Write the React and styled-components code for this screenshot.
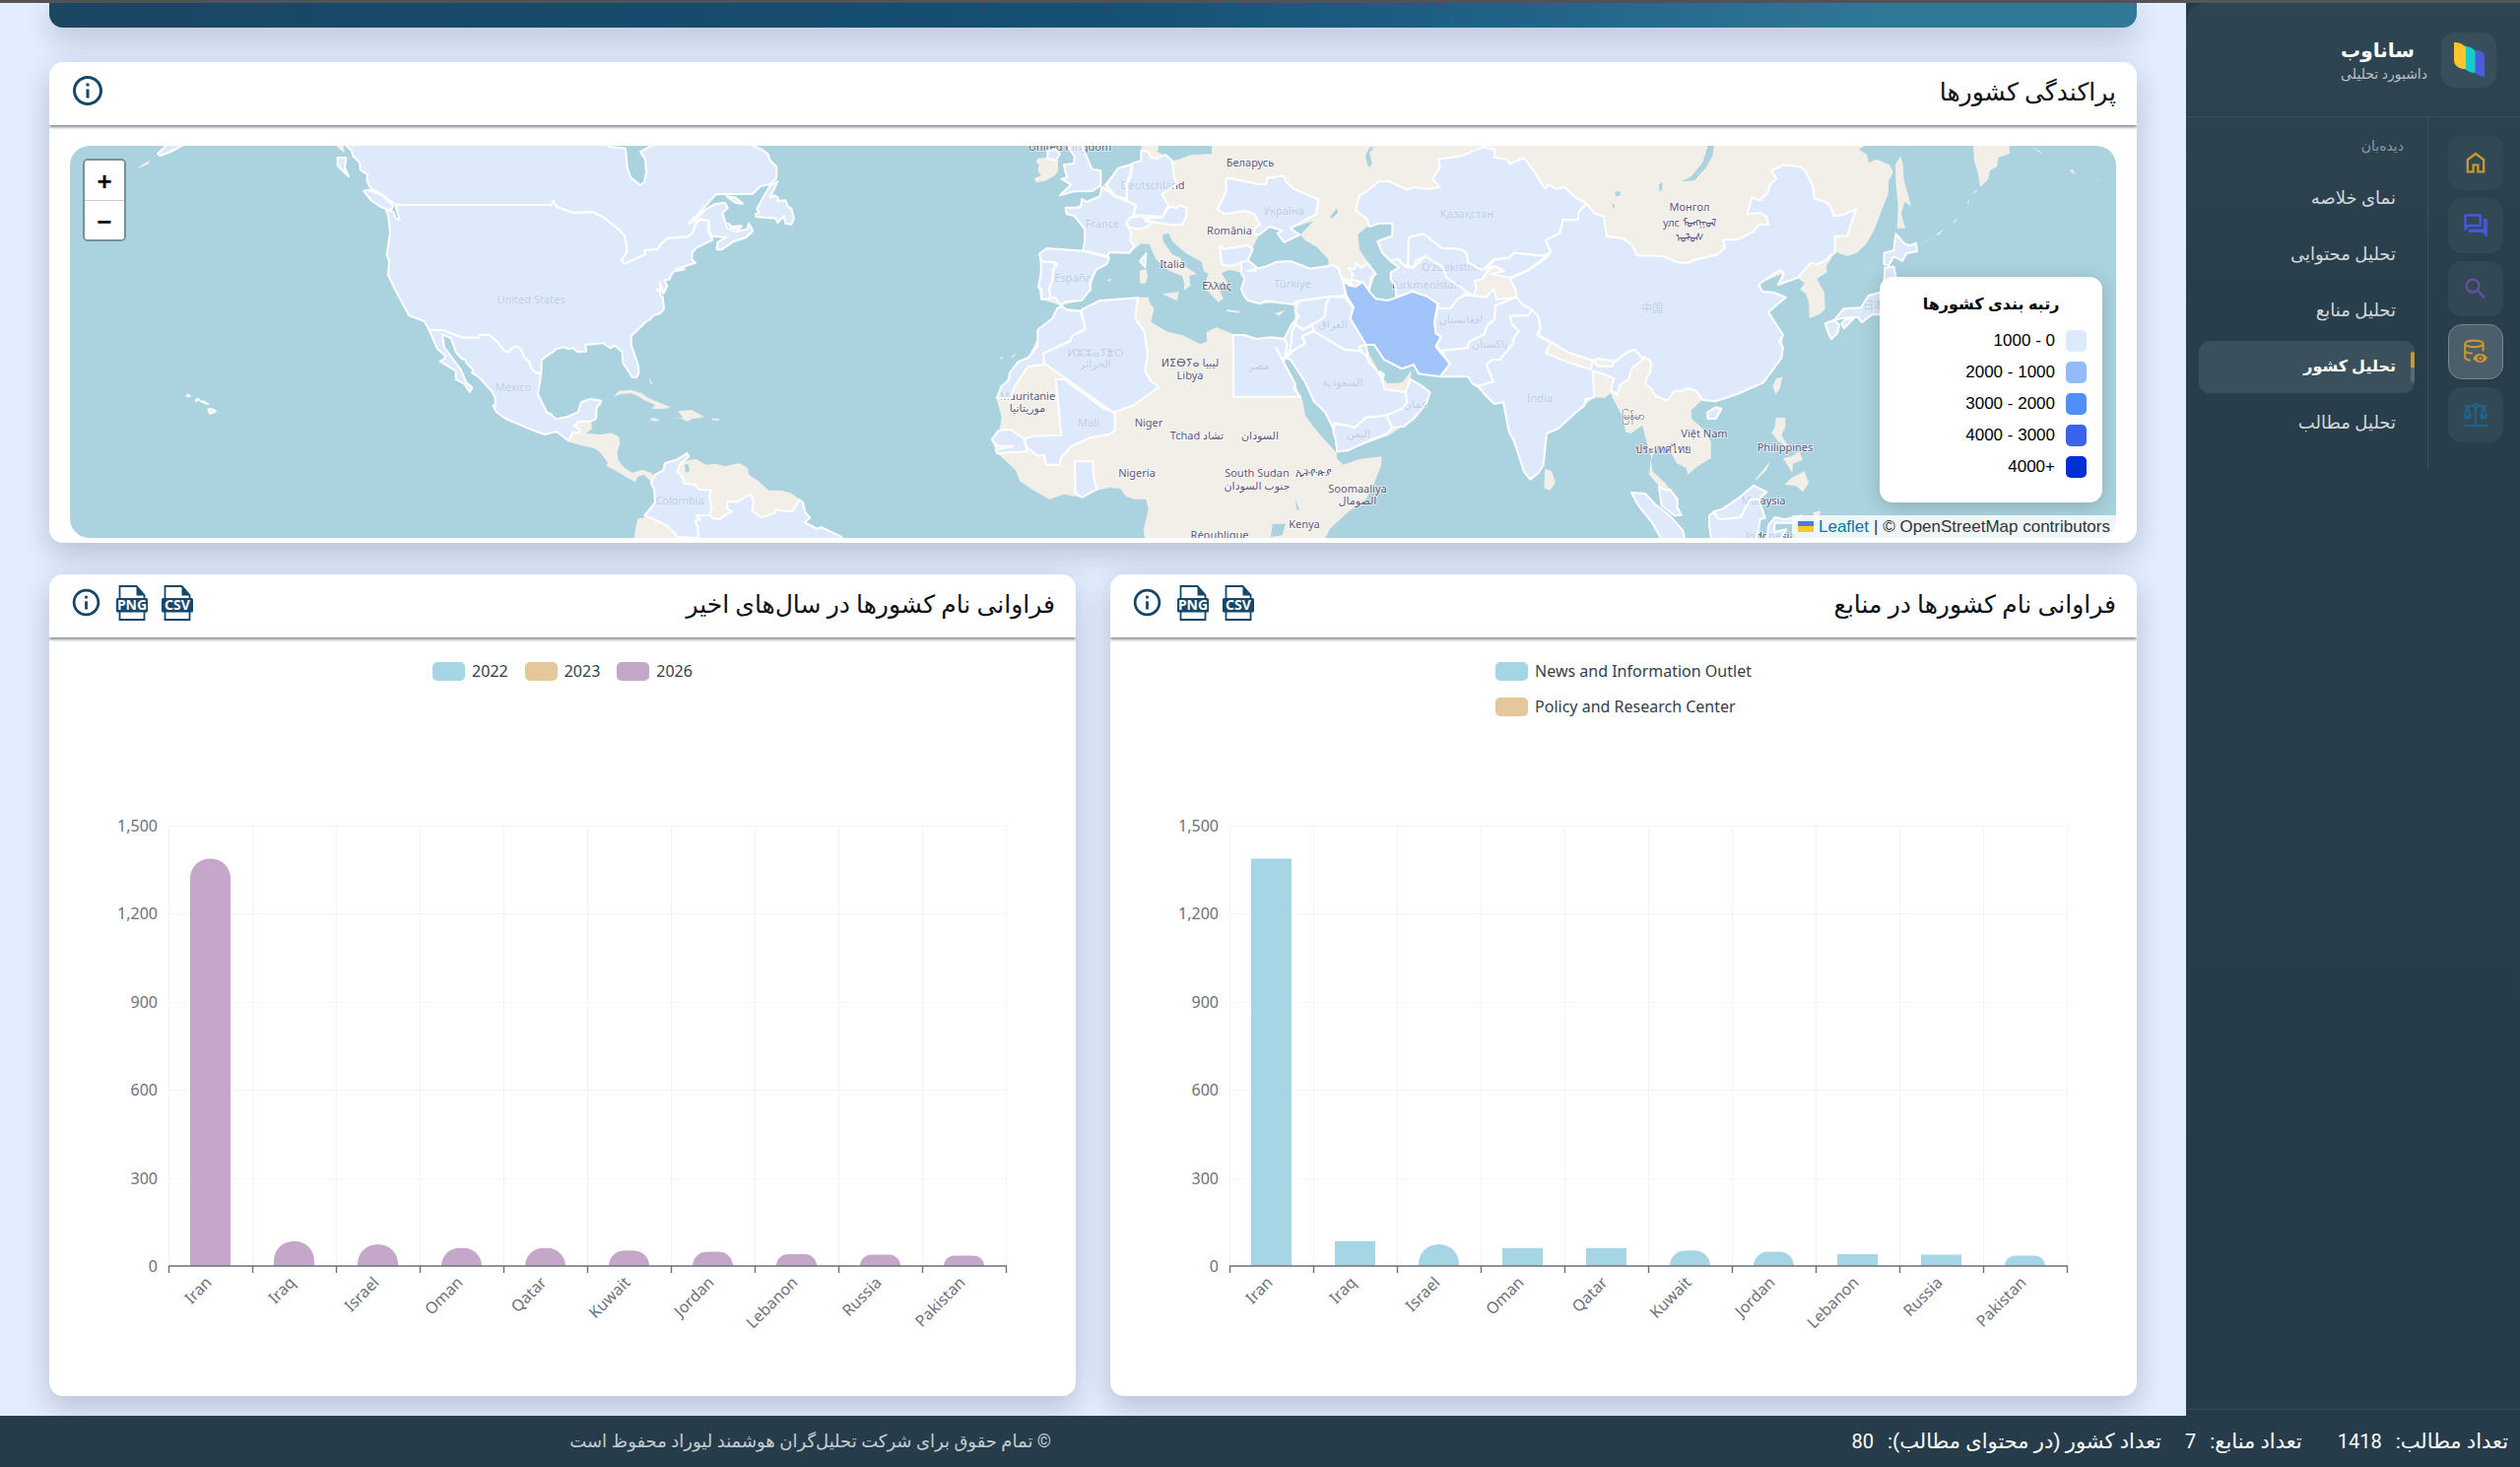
import React from "react";
import styled, { createGlobalStyle } from "styled-components";
import { MdInfoOutline, MdOutlineQuestionAnswer, MdSearch } from "react-icons/md";

const GlobalStyle = createGlobalStyle`
  * { box-sizing: border-box; }
  body {
    margin: 0;
    background: #e3edff;
    font-family: Roboto, "DejaVu Sans", sans-serif;
  }
  button { font: inherit; border: 0; padding: 0; background: none; cursor: pointer; }
  a { text-decoration: none; }
`;

const Page = styled.div`
  min-height: 100vh;
  display: flex;
  flex-direction: column;
  border-top: 3px solid #555;
`;

const Body = styled.div`
  flex: 1;
  display: flex;
`;

const Main = styled.main`
  flex: 1;
  min-width: 0;
  padding: 0 50px 20px;
  display: flex;
  flex-direction: column;
`;

const Hero = styled.div`
  height: 25px;
  margin-bottom: 35px;
  border-radius: 0 0 14px 14px;
  background: linear-gradient(90deg, #1c4662 0%, #17496a 20%, #155074 50%, #1f6085 68%, #2f7898 88%, #2f7898 100%);
  box-shadow: 0 14px 28px rgba(30, 30, 40, 0.16), 0 0 30px rgba(40, 70, 120, 0.08);
`;

const Card = styled.section`
  background: #fff;
  border-radius: 14px;
  box-shadow: 0 14px 28px rgba(30, 30, 40, 0.16), 0 0 30px rgba(40, 70, 120, 0.08);
`;

const MapCard = styled(Card)`
  margin-bottom: 32px;
  padding-bottom: 5px;
`;

const CardHeader = styled.header`
  height: 64px;
  padding: 0 21px 2px;
  display: flex;
  align-items: center;
  justify-content: space-between;
  box-shadow: 0 2px 3px rgba(30, 55, 80, 0.6);
  clip-path: inset(0 0 -10px 0);
`;

const CardTitle = styled.h2`
  margin: 0;
  color: #0b0f14;
  font-size: 25px;
  line-height: 36px;
  font-weight: 400;
`;

const Actions = styled.div`
  display: flex;
  align-items: center;
  gap: 14px;
`;

const IconButton = styled.button`
  display: flex;
  margin-bottom: 5px;
  color: #15476a;
`;

const ChartGrid = styled.div`
  display: grid;
  grid-template-columns: 1fr 1fr;
  gap: 35px;
`;

const MapFrame = styled.div`
  position: relative;
  height: 398px;
  margin: 21px 21px 0;
  border-radius: 20px;
  overflow: hidden;
  background: #aad3df;

  > svg {
    display: block;
    width: 100%;
    height: 100%;
  }
`;

const ZoomControl = styled.div`
  position: absolute;
  top: 13px;
  left: 13px;
  display: flex;
  flex-direction: column;
  border: 2px solid rgba(0, 0, 0, 0.3);
  background-clip: padding-box;
  border-radius: 5px;
  overflow: hidden;
`;

const ZoomButton = styled.button`
  width: 40px;
  height: 40px;
  background: #fff;
  color: #000;
  font: bold 26px/40px "Liberation Mono", monospace;
  padding-top: 3px;

  & + & {
    border-top: 1px solid #ccc;
  }
`;

const RankLegend = styled.div`
  position: absolute;
  right: 14px;
  bottom: 36px;
  width: 226px;
  padding: 17px 16px 25px;
  border-radius: 13px;
  background: #fff;
  box-shadow: 0 4px 20px rgba(0, 0, 0, 0.18);
  font-family: "Liberation Sans", "DejaVu Sans", sans-serif;
  font-size: 17px;
  line-height: 22px;
`;

const RankTitle = styled.h3`
  margin: 0 0 15px;
  font-size: 16px;
  line-height: 22px;
  text-align: center;
`;

const RankList = styled.div`
  display: flex;
  flex-direction: column;
  gap: 10px;
`;

const RankRow = styled.div`
  display: flex;
  align-items: center;
  gap: 11px;
`;

const RankSwatch = styled.span`
  width: 21px;
  height: 22px;
  border-radius: 5px;
  background: ${(p) => p.$color};
`;

const Attribution = styled.div`
  position: absolute;
  right: 0;
  bottom: 0;
  padding: 0 6px;
  display: flex;
  align-items: center;
  gap: 5px;
  background: rgba(255, 255, 255, 0.8);
  color: #333;
  font: 17px/23px "Liberation Sans", sans-serif;
  white-space: nowrap;

  a { color: #0078a8; }
`;

const ChartLegend = styled.div`
  height: 150px;
  padding-top: 23px;
  display: flex;
  flex-direction: ${(p) => (p.$stacked ? "column" : "row")};
  width: fit-content;
  margin: 0 auto;
  gap: ${(p) => (p.$stacked ? "14px" : "17px")};
`;

const LegendItem = styled.div`
  height: 22px;
  display: flex;
  align-items: center;
  gap: 7px;
  color: #333f4a;
  font: 16px/22px "Noto Sans", sans-serif;
`;

const LegendMark = styled.span`
  width: 33px;
  height: 19px;
  border-radius: 5px;
  background: ${(p) => p.$color};
`;

const Plot = styled.svg`
  display: block;
  width: 100%;
  height: 620px;
  font: 16px "Noto Sans", sans-serif;
  fill: #6e7079;
`;

const SidebarWrap = styled.div`
  display: flex;
  background: #263c4a;
`;

const Sidebar = styled.aside`
  width: 339px;
  flex: none;
  display: flex;
  flex-direction: column;
  background: linear-gradient(#304552, #283e4b 300px, #263c4a);
  border-top-left-radius: 20px;
`;

const Brand = styled.div`
  height: 116px;
  padding: 0 24px;
  display: flex;
  align-items: center;
  gap: 14px;
  border-bottom: 1px solid #3b4f5c;
`;

const BrandMark = styled.div`
  width: 56px;
  height: 56px;
  border-radius: 14px;
  background: #394e5b;
  display: grid;
  place-items: center;
`;

const BrandText = styled.div`
  text-align: left;
`;

const BrandName = styled.div`
  color: #fff;
  font-size: 20px;
  line-height: 28px;
  font-weight: 700;
`;

const BrandSub = styled.div`
  color: #b9c1c7;
  font-size: 14px;
  line-height: 20px;
`;

const Panels = styled.div`
  display: flex;
  flex: 1;
  align-items: flex-start;
`;

const Rail = styled.nav`
  width: 94px;
  height: 357px;
  padding: 18px 17px 0;
  display: flex;
  flex-direction: column;
  gap: 8px;
  border-left: 1px solid #3b4f5c;
`;

const RailButton = styled.button`
  width: 56px;
  height: 56px;
  border-radius: 14px;
  display: grid;
  place-items: center;
  color: ${(p) => p.$color};
  background: ${(p) => (p.$active ? "#4b5f6b" : "#334855")};
  border: 1px solid ${(p) => (p.$active ? "#77858e" : "transparent")};
`;

const Menu = styled.nav`
  flex: 1;
  padding: 16px 13px 0;
  display: flex;
  flex-direction: column;
  gap: 4px;
`;

const MenuHeading = styled.div`
  padding: 0 11px;
  margin-bottom: 10px;
  color: #8e9aa3;
  font-size: 14px;
  line-height: 26px;
`;

const MenuLink = styled.a`
  position: relative;
  height: 53px;
  padding: 0 19px 2px;
  display: flex;
  align-items: center;
  border-radius: 11px;
  font-size: ${(p) => (p.$active ? "16px" : "18px")};
  line-height: 24px;
  color: ${(p) => (p.$active ? "#fff" : "#d3d8dc")};
  font-weight: ${(p) => (p.$active ? 700 : 400)};
  background: ${(p) => (p.$active ? "#3b505d" : "transparent")};

  &::before {
    content: "";
    display: ${(p) => (p.$active ? "block" : "none")};
    position: absolute;
    right: 0;
    top: 11px;
    width: 4px;
    height: 31px;
    border-radius: 3px;
    background: linear-gradient(#c8972f 50%, #566974 55%);
  }
`;

const SidebarFoot = styled.div`
  height: 7px;
  border-top: 1px solid #34495a;
`;

const Footer = styled.footer`
  height: 52px;
  padding: 0 12px;
  display: grid;
  grid-template-columns: 1479px 1fr;
  align-items: center;
  background: #263c4a;
  color: #fff;
`;

const Stats = styled.dl`
  margin: 0;
  display: flex;
  gap: 24px;
  font-size: 20px;
  line-height: 30px;
`;

const Stat = styled.div`
  display: flex;
  gap: 14px;

  &:first-child { margin-left: 12px; }
  dt, dd { margin: 0; }
  dt { font-size: 21px; }
`;

const Copyright = styled.div`
  color: #c5ccd1;
  font-size: 18px;
  line-height: 26px;
`;

/* Map outlines: every point list belongs to a tile, three units to a pixel. */
const tiles = {
  a: [-93, -294],
  b: [1467, -54],
  c: [2787, -54],
  d: [3927, -54],
  e: [5127, -294],
};

const toPoints = (parts) =>
  parts
    .map(([tile, list]) =>
      list
        .trim()
        .split(/\s+/)
        .map((pair) => {
          const [x, y] = pair.split(",").map(Number);
          const [ox, oy] = tiles[tile];
          return `${((x + ox) / 3).toFixed(1)},${((y + oy) / 3).toFixed(1)}`;
        })
        .join(" ")
    )
    .join(" ");

const land = [
  [["b", "120,893 123,915 105,930 150,933 180,928 205,940 208,960 200,985 202,1010 222,1035 245,1050 275,1040 300,1048 312,1058 305,1078 280,1055 262,1062 255,1078 232,1066 190,1040 168,1030 170,1018 150,990 130,975 85,965 60,958 53,953 62,928 84,928 85,918 68,907 78,893"]],
  [["b", "188,818 205,800 240,797 275,808 290,820 325,835 362,850 340,855 305,855 315,843 280,828 262,815 240,808 210,810"]],
  [["b", "362,885 400,882 385,862 425,858 450,870 465,880 430,885 412,893 395,885"]],
  [["b", "297,885 315,883 330,890 310,893"]],
  [["b", "487,884 512,885 510,890 490,890"]],
  [["b", "296,758 308,780 300,778"]],
  [["b", "380,1048 390,1020 415,1012 440,1008 470,1025 500,1022 530,1030 570,1020 598,1035 600,1055 630,1075 660,1103 700,1103 730,1112 755,1130 735,1200 500,1248 385,1260 250,1260 255,1220 262,1190 285,1185 320,1150"]],
  [
    ["c", "165,383 188,366 300,374 303,308 250,250 300,230 350,208 355,180 405,122 445,108 475,100 475,66 480,40 530,40 525,72 550,85 572,100 590,95 625,82 690,78 690,30"],
    ["e", "345,270 345,290 320,305 345,320 350,345 375,335 415,352 425,375 412,400 410,440 390,490 370,545 345,590 315,620 285,630 262,622 250,615 235,640 222,660 223,680 193,698 215,740 218,790 205,805 170,820 168,770 160,745 142,732 155,712 135,697 75,717 92,682 20,712 28,738 98,755 45,800 90,870 85,940 30,1015"],
    ["d", "1150,810 1085,832 1040,830 1010,860 1012,885 1045,915 1070,955 1070,1005 1030,1030 1000,1055 995,1035 965,1020 950,990 925,985 905,965 888,1010 892,1045 930,1080 945,1100 965,1130 978,1178 955,1175 918,1140 912,1090 882,1055 888,1000 870,940 862,905 825,930 810,925 805,885 775,830 765,808 745,822 715,820 640,880 570,930 560,1025 520,1070 500,1040 455,925 438,835 410,840 380,810 345,780 330,757 245,757 180,748 165,720 130,733 75,705 45,660 20,660 30,690 70,760 85,778 130,775 158,738 155,765 215,805 190,855 165,885 90,935 0,968"],
    ["c", "1105,982 1072,985 1060,925 1035,865 1000,830 975,775 930,705 912,700 925,650 945,600 940,540 890,532 838,535 800,525 785,490 790,460 780,440 745,432 720,442 740,475 705,472 725,520 710,530 665,482 680,445 665,435 660,408 610,380 570,345 560,320 540,325 542,345 570,385 595,395 600,415 645,445 622,450 625,480 605,495 607,475 600,450 560,435 520,400 500,355 475,352 440,380 380,380 375,400 340,430 320,490 295,525 230,540 170,522 162,485 170,440"],
  ],
  [["c", "230,545 290,555 350,525 465,515 497,515 500,530 515,550 505,590 555,620 600,630 655,658 675,650 675,620 705,607 755,627 830,640 880,640 912,700 885,665 945,780 968,835 975,875 1000,910 1030,945 1072,990 1070,1005 1090,1025 1140,1008 1208,1000 1205,1030 1185,1080 1160,1130 1110,1165 1050,1220 1030,1260 488,1260 482,1225 497,1160 490,1130 455,1130 430,1122 412,1098 380,1095 340,1103 295,1125 240,1115 195,1130 150,1105 105,1075 95,1045 60,1010 35,990 20,950 45,915 50,880 35,825 75,750 130,700 160,640 215,560"]],
  [["c", "540,505 590,498 585,525 560,515"]],
  [["c", "470,435 490,428 495,450 490,472 472,475"]],
  [["c", "735,552 778,558 770,563 735,558"]],
  [["c", "882,565 915,553 895,572"]],
  [["c", "370,463 385,458 378,468"]],
  [["c", "160,92 190,90 222,98 222,130 212,145 180,162 155,165 150,152 170,145 160,128 165,112 155,105"]],
  [["d", "565,1037 585,1045 597,1080 580,1103 562,1097"]],
  [["e", "70,1002 88,998 80,1035 67,1050 58,1025"]],
  [["e", "68,1122 97,1122 97,1150 85,1175 100,1200 122,1215 100,1210 75,1193 55,1168 65,1150"]],
  [["e", "90,1245 115,1240 140,1225 150,1250 120,1262 118,1290 105,1270"]],
  [["e", "155,1285 168,1320 150,1348 130,1330 95,1325 115,1305"]],
  [["e", "5,1310 50,1255 40,1280 8,1312"]],
  [["e", "448,325 455,350 458,400 480,478 460,465 450,500 462,545 437,545 440,480 433,400 432,350"]],
  [["e", "668,280 778,280 780,318 745,330 742,358 720,370 715,395 690,420 684,380 672,340"]],
  [["e", "665,440 685,425 678,435"]],
  [["e", "650,468 658,455 654,472"]],
  [["e", "610,525 620,512 614,528"]],
  [["e", "555,565 580,547 565,565"]],
  [["e", "500,600 550,568 530,582"]],
  [["e", "960,368 972,366 980,382"]],
  [["e", "845,296 870,310 880,320"]],
  [["e", "1040,390 1060,400 1050,396"]],
  [["e", "180,1410 205,1405 195,1440"]],
  [["a", "295,365 318,348 338,338 330,350"]],
  [["a", "905,294 925,294 930,315 915,305"]],
  [["c", "45,700 55,695 50,705"]],
  [["c", "80,695 95,683 85,700"]],
];

const water = [
  [["c", "812,368 835,325 865,300 905,312 890,320 910,348 958,325 930,305 1000,283 960,325 975,342 1010,362 1045,400 1045,420 990,428 930,405 885,408 860,422 825,425 800,405"]],
  [["d", "-5,325 30,295 60,290 100,290 100,328 55,345 60,365 95,410 122,415 120,430 95,438 110,480 112,515 85,525 50,520 30,500 50,440 20,400 0,370"]],
  [["d", "1062,50 1080,54 1075,85 1055,120 1020,160 978,163 1010,148 1045,105"]],
  [["d", "912,172 922,165 922,185 914,195"]],
  [["d", "778,195 793,192 795,205 780,208"]],
  [["d", "770,228 778,238 772,245"]],
  [["c", "875,1205 915,1205 905,1240 870,1245"]],
  [["c", "1050,270 1070,245 1075,258 1055,275"]],
  [["c", "1170,60 1180,54 1165,80 1178,110 1170,120 1158,85"]],
  [["d", "25,70 50,54 30,75 38,108 25,115 20,90"]],
  [["b", "405,1025 415,1022 420,1045 408,1050"]],
  [["c", "945,1130 958,1165 948,1160"]],
];

const countries = [
  [
    ["a", "930,270 935,294 950,308 955,325 975,345 978,368 1000,382 997,400 1010,425 1040,440 1060,455 1085,474"],
    ["b", "0,234 5,222 15,240 65,258 125,256 155,270 200,305 222,328 230,372 213,405 222,413 285,385 283,372 322,370 330,357 352,335 415,331 430,318 440,285 455,275 460,282 478,282 480,315 490,330 532,332 505,348 503,370 517,370 555,345 592,333 613,313 600,290 595,308 560,316 535,305 530,290 520,258 536,243 527,227 495,232 470,247 430,285 416,290 450,258 500,202 612,200 635,178 665,170 685,152 685,118 665,98 658,78 640,65 612,54 600,20 320,20 305,54 270,72 285,95 288,135 282,165 270,173 240,150 230,118 225,62 175,57 160,20"],
  ],
  [["a", "988,432 1000,428 1045,445 1078,478 1070,490 1040,480 1010,460"]],
  [["a", "908,330 934,330 930,360 942,388 908,354"]],
  [["a", "360,318 390,290 440,290 400,312 368,324"]],
  [["b", "537,290 548,300 578,298 570,310 545,303"]],
  [["b", "533,208 560,212 582,230 560,228"]],
  [["b", "688,162 665,212 680,205 690,212 688,222 712,220 720,240 730,245 738,275 730,293 712,290 707,268 688,288 683,275 622,270 622,262 632,258 625,245 665,175"]],
  [
    ["a", "1085,474 1088,490 1097,520 1085,515 1078,495 1055,490 1063,508 1068,560 1058,625 1065,648 1062,688 1080,725 1125,810 1172,828 1187,855 1228,855 1290,878 1338,878 1338,870 1370,870 1395,892 1415,918 1430,922 1440,908 1455,905 1465,912 1478,940 1490,950 1500,975 1512,985 1528,988 1530,945 1560,923"],
    ["b", "0,685 15,672 38,667 50,673 65,670 78,682 105,680 103,660 157,655 178,670 193,662 215,682 217,715 245,758 258,760 265,748 263,720 242,660 242,633 290,587 300,583 310,570 330,565 342,550 338,515 332,510 330,495 318,492 332,490 330,470 340,505 352,480 343,463 357,462 370,437 405,430 378,430 438,410 427,400 428,380 440,365 490,340 478,315 478,282 455,278 440,288 430,318 415,331 352,335 330,357 322,370 283,372 285,385 222,413 213,405 230,372 222,328 200,305 155,270 125,256 65,258 15,240 5,222 0,234"],
  ],
  [
    ["a", "1187,855 1228,855 1290,878 1338,878 1338,870 1370,870 1395,892 1415,918 1430,922 1440,908 1455,905 1465,912 1478,940 1490,950 1500,975 1512,985 1528,988 1518,1050 1545,1105 1560,1112"],
    ["b", "0,875 15,886 45,880 80,865 90,835 118,825 150,830 148,840 137,850 135,885 120,893 78,893 75,905 68,907 85,918 84,928 62,928 53,953 15,925 0,927"],
    ["a", "1540,1173 1515,1165 1420,1125 1392,1105 1382,1085 1388,1085 1388,1062 1378,1042 1338,998 1318,985 1320,975 1300,955 1297,945 1287,943 1270,925 1253,880 1227,868 1233,908 1283,975 1300,1015 1318,1030 1310,1043 1293,1018 1268,1005 1268,980 1220,950 1235,942 1235,933 1212,912"],
  ],
  [["a", "448,1055 455,1052 458,1057"]],
  [["a", "476,1070 482,1064 486,1068"]],
  [["a", "492,1072 505,1075 514,1080 505,1078"]],
  [["a", "514,1096 525,1096 537,1102 520,1110"]],
  [["b", "315,1055 340,1042 345,1020 380,1010 412,990 418,1000 390,1025 382,1047 400,1065 403,1083 435,1085 450,1100 485,1103 480,1120 487,1160 480,1178 440,1180 453,1192 437,1195 445,1215 447,1248 385,1245 350,1210 325,1197 283,1180 315,1140 312,1100 302,1080"]],
  [["b", "400,1275 447,1260 445,1215 437,1195 453,1192 440,1180 480,1178 490,1188 512,1192 525,1180 550,1168 535,1160 535,1138 565,1138 605,1115 615,1135 610,1165 637,1185 680,1172 680,1162 732,1168 755,1132 765,1140 772,1170 787,1187 770,1200 808,1220 820,1215 880,1243 900,1275"]],
  [["c", "170,402 210,408 215,425 207,430 205,465 195,485 200,518 172,522 172,490 162,485 170,440"]],
  [["c", "165,383 188,366 300,374 378,395 370,415 340,430 318,468 322,490 293,525 245,528 230,540 215,518 198,515 195,487 205,465 207,430 220,415 210,407 180,408 170,402"]],
  [["c", "355,180 400,210 432,222 460,235 450,268 430,290 445,320 442,345 455,358 440,380 380,378 370,390 298,373 303,345 303,308 273,268 248,262 245,242 290,242 295,215 308,225 350,208"]],
  [["c", "370,172 405,122 447,110 440,148 430,168 432,215 400,208 372,180"]],
  [["c", "445,145 447,108 475,100 475,68 497,72 505,90 520,92 550,82 570,100 575,150 583,170 538,202 558,235 540,270 452,265 460,235 432,222 432,168"]],
  [["c", "430,290 440,272 480,268 490,285 508,285 500,298 470,308 440,302"]],
  [["c", "485,275 540,272 560,240 585,243 590,235 615,243 612,268 600,293 570,295 505,285"]],
  [["c", "240,30 262,72 272,85 270,108 240,112 243,128 250,150 232,155 262,172 228,205 270,193 325,192 352,175 352,130 325,125 300,65 285,30"]],
  [["c", "190,70 215,65 228,78 215,98 190,92"]],
  [["c", "490,382 487,423 472,405"]],
  [["c", "732,158 740,152 830,170 855,172 860,152 908,145 918,165 940,185 1015,218 1008,262 930,305 958,325 910,348 890,320 905,312 865,300 835,325 818,322 825,300 838,295 820,262 790,252 730,262 708,248 735,190"]],
  [["c", "713,360 725,368 800,357 815,368 800,403 750,420 720,415 718,390"]],
  [["c", "780,408 800,403 825,422 822,435 800,435 860,420 885,408 930,405 990,428 1060,418 1078,428 1082,450 1092,470 1095,510 1050,513 950,527 940,537 895,532 855,525 838,535 800,525 788,510 780,490 790,460 780,440"]],
  [["c", "1105,425 1125,430 1130,410 1145,425 1165,412 1190,445 1175,455 1170,490 1145,470 1115,460 1120,445"]],
  [["c", "1090,458 1108,462 1118,480 1105,472"]],
  [["c", "955,527 1050,513 1035,578 970,612 942,595 955,575 945,555"]],
  [["c", "1050,513 1095,515 1120,545 1112,580 1160,658 1138,678 1095,675 1000,618 995,598 1035,575 1038,535"]],
  [["c", "930,605 945,600 968,615 995,598 1000,618 965,635 975,655 935,680 915,690 930,650"]],
  [["c", "912,640 932,600 952,575 935,620 930,670 918,700"]],
  [
    ["c", "1000,618 1095,675 1138,678 1160,690"],
    ["d", "30,715 50,735 70,765 75,795 140,805 145,835 130,855 82,875"],
    ["c", "1160,882 1125,912 1100,905 1065,898 1060,912 1035,865 1000,830 975,775 930,705 915,700 935,680 975,655 965,635"],
  ],
  [["c", "1065,900 1100,905 1125,912 1160,882 1222,875 1240,910 1225,930 1150,960 1105,982 1072,985 1068,950 1060,925"]],
  [["d", "155,765 190,785 215,805 205,835 190,855 165,885 135,908 100,912 82,875 130,855 145,835 140,805"]],
  [["d", "62,740 75,750 68,770"]],
  [["c", "1138,665 1160,660 1165,690 1150,685"]],
  [["c", "755,630 790,630 825,642 870,637 912,642 920,660 910,710 885,668 945,780 940,795 960,818 757,818"]],
  [["c", "293,553 350,525 465,517 460,555 457,580 485,620 495,690 487,740 505,770 530,788 450,845 385,868 380,858 178,715 178,685 260,648 265,632 305,612"]],
  [["c", "220,548 235,543 250,555 290,557 305,612 265,632 260,648 178,685 178,720 130,727 88,790 80,823 35,823 50,785 70,770 75,745 100,712 130,700 160,665 160,615 205,580"]],
  [["c", "215,765 240,765 355,850 395,868 395,920 380,932 320,942 260,970 230,1005 228,1025 185,1025 180,995 160,998 150,990 125,970 120,945 145,938 232,935"]],
  [["c", "20,948 40,922 75,917 118,945 128,985 35,990 33,980 85,968 35,968"]],
  [["c", "273,1015 328,1015 330,1060 340,1100 295,1125 275,1110"]],
  [["d", "0,205 25,190 60,162 90,162 145,188 165,180 210,185 245,180 222,155 245,120 240,95 310,85 375,58 410,65 412,90 450,95 458,110 500,90 530,130 565,185 575,172 600,185 625,180 660,213 690,228 668,255 665,280 620,280 610,320 568,340 582,378 560,390 470,380 455,395 410,400 375,435 330,410 325,380 305,368 250,365 195,322 150,333 148,420 135,418 115,398 95,405 70,380 55,345 100,328 100,290 60,290 30,300 22,275 -12,250"]],
  [["d", "150,333 195,322 250,365 305,368 325,380 330,410 375,432 408,402 405,425 385,440 375,460 350,465 355,480 350,510 330,500 265,455 255,425 200,390 170,405 165,425 148,420"]],
  [["d", "95,405 115,398 140,422 165,425 200,390 255,425 265,455 330,500 300,520 275,550 240,548 238,535 205,512 160,497 112,515 110,480 95,460 95,440 120,425"]],
  [["d", "455,395 470,380 570,390 515,430 460,455 400,445 440,435 410,420 385,430 410,402"]],
  [["d", "240,548 275,550 300,520 325,508 385,515 408,490 418,522 478,515 415,540 412,582 390,600 380,628 335,650 328,670 250,678 232,665 248,635 232,625 228,590"]],
  [["d", "250,678 328,670 335,650 380,628 390,600 412,582 415,540 478,515 500,540 525,552 515,570 458,572 465,598 485,618 470,640 465,660 428,705 405,705 387,720 408,772 362,785 345,780 330,757 245,757 275,718"]],
  [["d", "362,785 408,772 387,720 405,705 428,705 465,660 470,640 485,618 465,598 458,572 515,570 525,552 545,575 550,608 540,630 583,655 567,685 640,715 705,735 710,705 725,725 770,725 778,705 825,680 840,675 865,705 830,730 820,765 795,780 785,812 765,800 775,762 730,745 710,740 715,820 688,825 685,845 660,865 605,915 570,930 560,1025 545,1050 520,1070 500,1045 470,950 455,925 438,835 410,840 380,810"]],
  [
    ["d", "692,230 715,260 745,270 752,330 800,335 830,355 845,388 925,390 965,408 995,412 1020,402 1090,385 1112,365 1108,340 1150,340 1200,315 1215,295 1245,293 1240,270 1222,258 1180,262 1195,212 1220,220"],
    ["e", "45,435 50,410 70,395 55,370 90,352 145,358 160,375 180,415 185,455 220,465 235,480 245,508 270,505 312,487 285,568 248,570 248,620 232,628 225,640 195,655 175,650 135,695 75,717 92,682 82,672 20,712 15,720 28,738 60,740 98,755 45,800 90,870 78,890 90,908 85,940 30,1015"],
    ["d", "1150,810 1085,832 1045,828 1025,800 1000,792 985,800 960,800 935,830 910,818 905,820 885,790 870,780 875,760 885,745 888,712 865,695 865,705 840,675 815,680 780,710 725,702 710,708 640,685 590,655 545,630 552,608 545,575 525,552 500,540 478,515 475,490 458,460 520,430 570,395 582,378 568,340 610,320 620,280 665,280 668,255"],
  ],
  [["d", "1060,865 1085,850 1102,855 1085,885 1060,885"]],
  [["d", "912,1092 930,1102 945,1100 968,1130 968,1155 980,1178 960,1180 920,1150"]],
  [["d", "828,1110 870,1113 900,1145 945,1180 985,1225 995,1270 930,1270 890,1200 850,1150"]],
  [["d", "1065,1180 1078,1170 1095,1188 1160,1185 1190,1130 1215,1130 1228,1165 1235,1188 1220,1190 1215,1225 1200,1275 1075,1275 1065,1210"]],
  [["d", "1078,1168 1105,1160 1150,1130 1200,1088 1240,1108 1215,1130 1190,1130 1160,1185 1095,1192"]],
  [["e", "45,1450 65,1425 95,1432 145,1420 130,1442 65,1442 62,1470 100,1462 75,1500 40,1500"]],
  [["e", "433,562 460,592 475,598 495,590 498,615 465,622 453,645 427,630 412,658 397,655 398,620 427,612"]],
  [["e", "400,665 427,662 435,700 430,800 385,808 360,808 330,832 318,815 275,818 245,825 275,790 327,787 350,750 385,740 398,700"]],
  [["e", "218,835 245,825 262,840 255,865 237,882 228,865"]],
  [["e", "268,835 280,822 305,820 290,835 275,850"]],
];

const iran = [
  ["c", "1090,465 1110,480 1130,482 1150,468 1172,500"],
  ["d", "50,520 85,525 115,515 160,497 205,512 238,535 228,590 232,625 248,635 232,665 275,718 245,757 180,748 165,720 130,733 75,705 45,660 20,660"],
  ["c", "1112,580 1122,545 1100,510"],
];

// [tile, centre x, baseline, text]
const labels = [
  ["a", 1498, 775, "United States"],
  ["a", 1442, 1040, "México"],
  ["b", 390, 1145, "Colombia"],
  ["c", 258, 68, "United Kingdom"],
  ["c", 808, 116, "Беларусь"],
  ["c", 510, 187, "Deutschland"],
  ["c", 358, 302, "France"],
  ["c", 910, 265, "Україна"],
  ["c", 745, 325, "România"],
  ["c", 570, 425, "Italia"],
  ["c", 268, 467, "España"],
  ["c", 705, 491, "Ελλάς"],
  ["c", 935, 486, "Türkiye"],
  ["c", 1058, 610, "العراق"],
  ["c", 337, 695, "ⵍⵣⵣⴰⵢⴻⵔ"],
  ["c", 337, 730, "الجزائر"],
  ["c", 625, 727, "ⵍⵉⴱⵢⴰ ليبيا"],
  ["c", 625, 764, "Libya"],
  ["c", 835, 735, "مصر"],
  ["c", 1088, 787, "السعودية"],
  ["c", 128, 828, "Mauritanie"],
  ["c", 128, 865, "موريتانيا"],
  ["c", 315, 909, "Mali"],
  ["c", 497, 909, "Niger"],
  ["c", 646, 948, "Tchad تشاد"],
  ["c", 838, 948, "السودان"],
  ["c", 1138, 943, "اليمن"],
  ["c", 461, 1062, "Nigeria"],
  ["c", 828, 1063, "South Sudan"],
  ["c", 828, 1100, "جنوب السودان"],
  ["c", 998, 1060, "ኢትዮጵያ"],
  ["c", 1134, 1109, "Soomaaliya"],
  ["c", 1134, 1145, "الصومال"],
  ["c", 972, 1219, "Kenya"],
  ["c", 713, 1251, "République"],
  ["d", 328, 274, "Қазақстан"],
  ["d", 278, 434, "Oʻzbekiston"],
  ["d", 200, 488, "Türkmenistan"],
  ["d", 310, 595, "افغانستان"],
  ["d", 395, 670, "پاکستان"],
  ["d", 549, 833, "India"],
  ["d", 172, 852, "عمان"],
  ["d", 891, 560, "中国"],
  ["d", 1004, 253, "Монгол"],
  ["d", 1004, 300, "улс ᠮᠣᠩᠭᠣᠯ"],
  ["d", 1004, 346, "ᠤᠯᠤᠰ"],
  ["d", 832, 888, "မြန်မာ"],
  ["d", 1051, 943, "Việt Nam"],
  ["d", 924, 990, "ประเทศไทย"],
  ["e", 97, 1225, "Philippines"],
  ["e", 30, 1385, "Malaysia"],
  ["e", 50, 1494, "Indonesia"],
  ["e", 365, 793, "日本"],
];

const ranks = [
  ["#dde9fc", "0 - 1000"],
  ["#92bbfb", "1000 - 2000"],
  ["#4f8ff8", "2000 - 3000"],
  ["#3a62ec", "3000 - 4000"],
  ["#0030d2", "+4000"],
];

function WorldMap() {
  return (
    <svg viewBox="0 0 2077 398" preserveAspectRatio="xMidYMid slice" role="img" aria-label="نقشه جهان">
      <g fill="#f2efe9">
        {land.map((s, i) => <polygon key={i} points={toPoints(s)} />)}
      </g>
      <g fill="#aad3df">
        {water.map((s, i) => <polygon key={i} points={toPoints(s)} />)}
      </g>
      <g fill="#f2efe9">
        {countries.map((s, i) => <polygon key={i} points={toPoints(s)} />)}
      </g>
      <g
        fontFamily='"Noto Sans", "DejaVu Sans", "Noto Sans CJK SC", sans-serif'
        fontSize="11"
        textAnchor="middle"
        fill="#5c587c"
        stroke="rgba(255,255,255,0.6)"
        strokeWidth="2"
        strokeLinejoin="round"
        paintOrder="stroke"
      >
        {labels.map(([tile, x, y, text]) => (
          <text
            key={text}
            x={Math.round((x + tiles[tile][0]) / 3)}
            y={Math.round((y + tiles[tile][1]) / 3)}
          >
            {text}
          </text>
        ))}
      </g>
      {/* shaded countries are translucent, the labels stay faintly visible */}
      <g fill="#d8e8ff" fillOpacity="0.8" stroke="#fff" strokeWidth="2" strokeLinejoin="round">
        {countries.map((s, i) => <polygon key={i} points={toPoints(s)} />)}
        <polygon points={toPoints(iran)} fill="#8cb9ff" />
      </g>
    </svg>
  );
}

function FileIcon({ label }) {
  return (
    <svg width="32" height="36" viewBox="0 0 32 36" aria-hidden="true">
      <path d="M3.500 1H20.500L28.500 10V35H3.500Z" fill="#fff" stroke="#15476a" strokeWidth="1.800" />
      <path d="M20.500 0.500L29.400 10.500H20.500Z" fill="#15476a" />
      <rect y="13" width="32" height="14.500" rx="1.500" fill="#15476a" />
      <text x="16" y="25" textAnchor="middle" fill="#fff" fontFamily='"Noto Sans", sans-serif' fontWeight="700" fontSize="14">
        {label}
      </text>
    </svg>
  );
}

const countryNames = ["Iran", "Iraq", "Israel", "Oman", "Qatar", "Kuwait", "Jordan", "Lebanon", "Russia", "Pakistan"];
const counts = [1388, 85, 74, 61, 61, 53, 49, 40, 39, 35];
const ticks = [0, 300, 600, 900, 1200, 1500];

const LEFT = 122;
const BASE = 488;
const STEP = 85;
const SCALE = 447 / 1500;

function BarPlot({ color, rounded }) {
  return (
    <Plot viewBox="0 0 1042 620" preserveAspectRatio="xMidYMin meet">
      <g stroke="#f3f4f6">
        {ticks.slice(1).map((t) => (
          <line key={t} x1={LEFT} x2={LEFT + 850} y1={Math.round(BASE - t * SCALE) + 0.5} y2={Math.round(BASE - t * SCALE) + 0.5} />
        ))}
        {Array.from({ length: 11 }, (_, i) => (
          <line key={i} x1={LEFT + i * STEP - 0.5} x2={LEFT + i * STEP - 0.5} y1={41} y2={BASE} />
        ))}
      </g>
      {counts.map((n, i) => {
        const h = n * SCALE;
        const x = LEFT + i * STEP + 21;
        const r = rounded[i] ? Math.min(20, h) : 0;
        return (
          <path
            key={i}
            fill={color}
            d={`M${x} ${BASE}V${BASE - h + r}a${r} ${r} 0 0 1 ${r} ${-r}H${x + 41 - r}a${r} ${r} 0 0 1 ${r} ${r}V${BASE}Z`}
          />
        );
      })}
      <path
        d={`M${LEFT - 1} ${BASE}H${LEFT + 850}` + Array.from({ length: 11 }, (_, i) => `M${LEFT + i * STEP - 0.5} ${BASE}v7`).join("")}
        stroke="#6e7079"
        strokeWidth="1.4"
        fill="none"
      />
      {ticks.map((t) => (
        <text key={t} x={LEFT - 12} y={Math.round(BASE - t * SCALE) + 6} textAnchor="end">
          {t.toLocaleString("en-US")}
        </text>
      ))}
      {countryNames.map((name, i) => (
        <text key={name} textAnchor="end" transform={`translate(${LEFT + i * STEP + 36} ${BASE + 10}) rotate(-45)`} y="11">
          {name}
        </text>
      ))}
    </Plot>
  );
}

function ChartCard({ title, legend, stacked, color, rounded }) {
  return (
    <Card>
      <CardHeader dir="rtl">
        <CardTitle>{title}</CardTitle>
        <Actions>
          <IconButton aria-label="CSV"><FileIcon label="CSV" /></IconButton>
          <IconButton aria-label="PNG"><FileIcon label="PNG" /></IconButton>
          <IconButton aria-label="info"><MdInfoOutline size={33} /></IconButton>
        </Actions>
      </CardHeader>
      <ChartLegend $stacked={stacked}>
        {legend.map(([name, c]) => (
          <LegendItem key={name}><LegendMark $color={c} />{name}</LegendItem>
        ))}
      </ChartLegend>
      <BarPlot color={color} rounded={rounded} />
    </Card>
  );
}

const HomeIcon = () => (
  <svg width="28" height="28" viewBox="0 -960 960 960" fill="currentColor" aria-hidden="true">
    <path d="M240-200h120v-240h240v240h120v-360L480-740 240-560v360Zm-80 80v-480l320-240 320 240v480H520v-240h-80v240H160Z" />
  </svg>
);

const DatabaseEyeIcon = () => (
  <svg width="26" height="26" viewBox="0 0 24 24" fill="none" stroke="currentColor" strokeWidth="1.9" aria-hidden="true">
    <ellipse cx="10.500" cy="4.500" rx="8.500" ry="3" />
    <path d="M2 4.500v12.500c0 1.600 2 2.600 5 3M2 10.500c0 1.600 3 2.800 7 3M19 4.500v7" />
    <path d="M9.500 18c2.500-5.500 11-5.500 13.500 0-2.500 5.500-11 5.500-13.500 0Z" fill="currentColor" stroke="none" />
    <circle cx="16.300" cy="18" r="2" stroke="#4b5f6b" strokeWidth="1.200" />
  </svg>
);

const ScaleIcon = () => (
  <svg width="26" height="26" viewBox="0 0 24 24" fill="none" stroke="currentColor" strokeWidth="1.700" aria-hidden="true">
    <circle cx="12" cy="3.500" r="1.800" />
    <path d="M1.500 4H10M14 4h8.500M12 5.500V22M1 22.200H23M4.500 4.500L1.500 13a3.200 3.200 0 0 0 6 0L4.500 4.500M19.500 4.500l-3 8.500a3.200 3.200 0 0 0 6 0L19.500 4.500M1.500 13h6M16.500 13h6" />
  </svg>
);

const Logo = () => (
  <svg width="31" height="35" viewBox="0 0 31 35" aria-hidden="true">
    <path d="M21 7.500C27 8 31 10 31 15V35C27 34 23 33 21 31Z" fill="#4a5bdc" />
    <path d="M10 3.500C16 4 20 6 21.500 10V31C17 31 13 29 11 27Z" fill="#14cdc8" />
    <path d="M0 0C6 0 10 2 12 6V27H9C4 26 0 23 0 18Z" fill="#fec52a" />
  </svg>
);

const railItems = [
  { label: "خانه", color: "#c8972f", icon: <HomeIcon /> },
  { label: "گفتگو", color: "#4458e0", icon: <MdOutlineQuestionAnswer size={28} /> },
  { label: "جستجو", color: "#6a4fa8", icon: <MdSearch size={28} /> },
  { label: "پایگاه داده", color: "#c8972f", icon: <DatabaseEyeIcon />, active: true },
  { label: "مقایسه", color: "#1d6690", icon: <ScaleIcon /> },
];

const menuItems = ["نمای خلاصه", "تحلیل محتوایی", "تحلیل منابع", "تحلیل کشور", "تحلیل مطالب"];

const stats = [
  ["تعداد مطالب:", "1418"],
  ["تعداد منابع:", "7"],
  ["تعداد کشور (در محتوای مطالب):", "80"],
];

export default function App() {
  return (
    <Page>
      <GlobalStyle />
      <Body>
        <Main>
          <Hero />
          <MapCard>
            <CardHeader dir="rtl">
              <CardTitle>پراکندگی کشورها</CardTitle>
              <IconButton aria-label="info"><MdInfoOutline size={36} /></IconButton>
            </CardHeader>
            <MapFrame>
              <WorldMap />
              <ZoomControl>
                <ZoomButton aria-label="Zoom in">+</ZoomButton>
                <ZoomButton aria-label="Zoom out">−</ZoomButton>
              </ZoomControl>
              <RankLegend dir="rtl">
                <RankTitle>رتبه بندی کشورها</RankTitle>
                <RankList>
                  {ranks.map(([color, text]) => (
                    <RankRow key={text}><RankSwatch $color={color} />{text}</RankRow>
                  ))}
                </RankList>
              </RankLegend>
              <Attribution>
                <svg width="16" height="11" viewBox="0 0 16 11" aria-hidden="true">
                  <path fill="#4c7be1" d="M0 0h16v6H0z" />
                  <path fill="#ffc828" d="M0 5h16v6H0z" />
                </svg>
                <a href="#leaflet">Leaflet</a>
                <span>| © OpenStreetMap contributors</span>
              </Attribution>
            </MapFrame>
          </MapCard>
          <ChartGrid>
            <ChartCard
              title="فراوانی نام کشورها در سال‌های اخیر"
              legend={[["2022", "#a6d5e5"], ["2023", "#e6c69b"], ["2026", "#c4a7c9"]]}
              color="#c4a7c9"
              rounded={counts.map(() => true)}
            />
            <ChartCard
              title="فراوانی نام کشورها در منابع"
              stacked
              legend={[["News and Information Outlet", "#a6d5e5"], ["Policy and Research Center", "#e6c69b"]]}
              color="#a6d5e5"
              rounded={[0, 0, 1, 0, 0, 1, 1, 0, 0, 1]}
            />
          </ChartGrid>
        </Main>
        <SidebarWrap dir="rtl">
          <Sidebar>
            <Brand>
              <BrandMark><Logo /></BrandMark>
              <BrandText>
                <BrandName>ساناوب</BrandName>
                <BrandSub>داشبورد تحلیلی</BrandSub>
              </BrandText>
            </Brand>
            <Panels>
              <Rail>
                {railItems.map((item) => (
                  <RailButton key={item.label} aria-label={item.label} $color={item.color} $active={item.active}>
                    {item.icon}
                  </RailButton>
                ))}
              </Rail>
              <Menu>
                <MenuHeading>دیده‌بان</MenuHeading>
                {menuItems.map((text, i) => (
                  <MenuLink key={text} href="#" $active={i === 3}>{text}</MenuLink>
                ))}
              </Menu>
            </Panels>
            <SidebarFoot />
          </Sidebar>
        </SidebarWrap>
      </Body>
      <Footer dir="rtl">
        <Stats>
          {stats.map(([name, value]) => (
            <Stat key={name}><dt>{name}</dt><dd>{value}</dd></Stat>
          ))}
        </Stats>
        <Copyright>© تمام حقوق برای شرکت تحلیل‌گران هوشمند لیوراد محفوظ است</Copyright>
      </Footer>
    </Page>
  );
}
